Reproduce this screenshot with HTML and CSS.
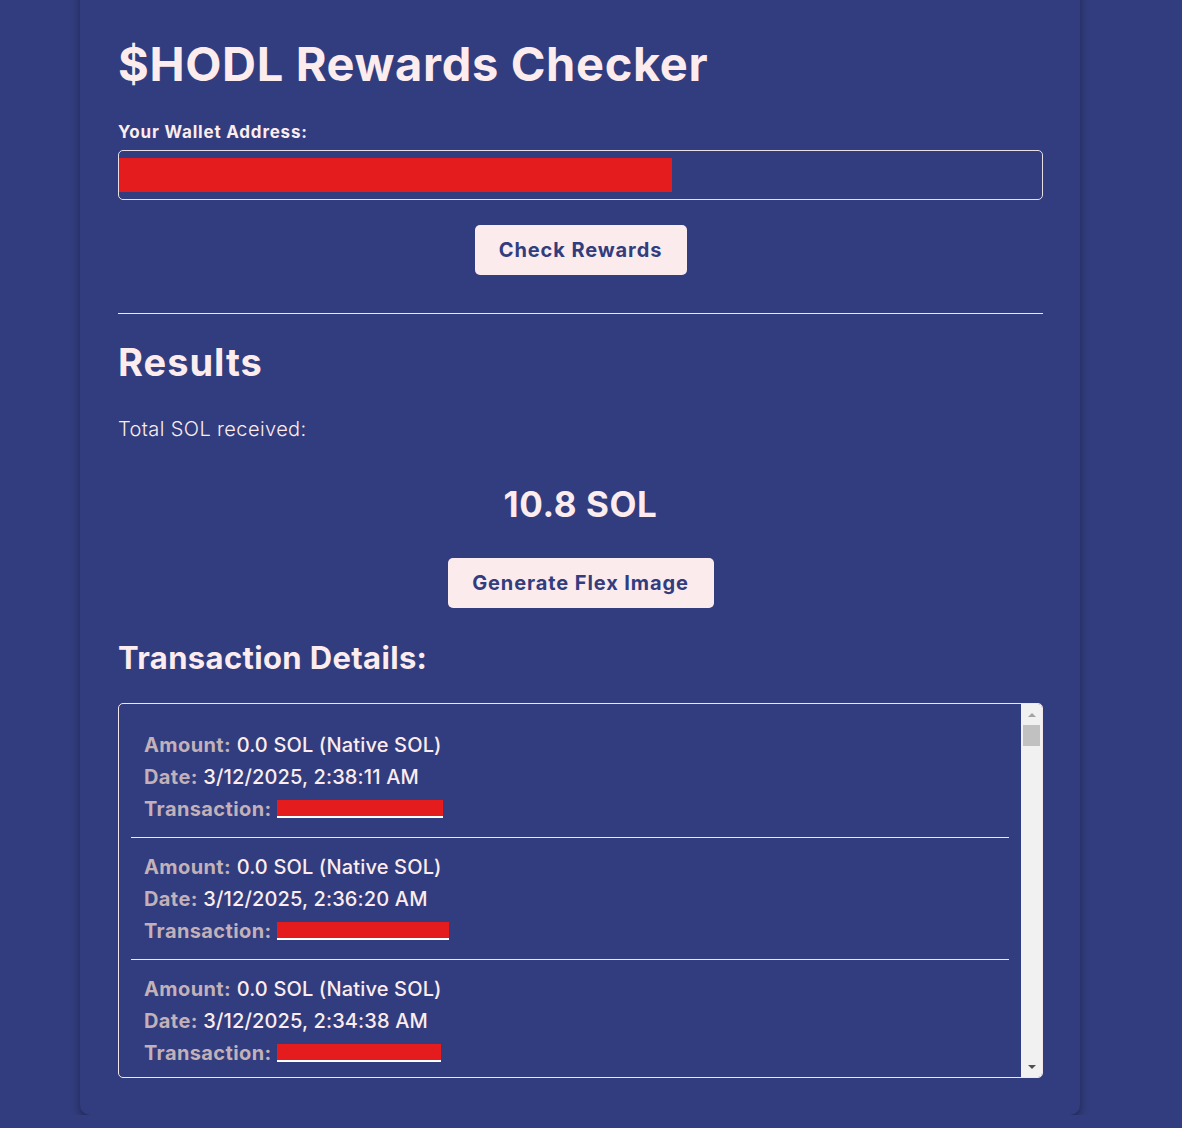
FILE: index.html
```html
<!DOCTYPE html>
<html lang="en">
<head>
<meta charset="utf-8">
<title>$HODL Rewards Checker</title>
<link rel="stylesheet" href="styles.css">
</head>
<body>
<main class="card">
  <h1 class="title">$HODL Rewards Checker</h1>
  <label class="field-label" for="wallet">Your Wallet Address:</label>
  <div class="input-box" id="wallet"><span class="redact redact-input"></span></div>
  <div class="center">
    <button class="btn btn-check">Check Rewards</button>
  </div>
  <hr class="divider">
  <h2 class="results-title">Results</h2>
  <p class="total-label">Total SOL received:</p>
  <p class="total-value">10.8 SOL</p>
  <div class="center">
    <button class="btn btn-flex">Generate Flex Image</button>
  </div>
  <h3 class="details-title">Transaction Details:</h3>
  <div class="tx-box">
    <ul class="tx-list">
      <li class="tx-item">
        <div class="tx-line"><span class="k">Amount:</span> 0.0 SOL (Native SOL)</div>
        <div class="tx-line"><span class="k">Date:</span> 3/12/2025, 2:38:11 AM</div>
        <div class="tx-line"><span class="k">Transaction:</span> <a class="tx-link" href="#"><span class="redact" style="width:166px"></span></a></div>
      </li>
      <li class="tx-item">
        <div class="tx-line"><span class="k">Amount:</span> 0.0 SOL (Native SOL)</div>
        <div class="tx-line"><span class="k">Date:</span> 3/12/2025, 2:36:20 AM</div>
        <div class="tx-line"><span class="k">Transaction:</span> <a class="tx-link" href="#"><span class="redact" style="width:172px"></span></a></div>
      </li>
      <li class="tx-item">
        <div class="tx-line"><span class="k">Amount:</span> 0.0 SOL (Native SOL)</div>
        <div class="tx-line"><span class="k">Date:</span> 3/12/2025, 2:34:38 AM</div>
        <div class="tx-line"><span class="k">Transaction:</span> <a class="tx-link" href="#"><span class="redact" style="width:164px"></span></a></div>
      </li>
    </ul>
    <div class="scrollbar" aria-hidden="true">
      <span class="sb-btn sb-up"></span>
      <span class="sb-thumb"></span>
      <span class="sb-fill"></span>
      <span class="sb-btn sb-down"></span>
    </div>
  </div>
</main>
</body>
</html>
```
FILE: styles.css
```css
* { box-sizing: border-box; }

html, body {
  margin: 0;
  padding: 0;
  background: #313d7e;
}

body {
  font-family: "Inter", "Noto Sans", sans-serif;
  color: #fcecee;
  overflow: hidden;
}

.card {
  width: 1000px;
  margin: -30px 0 0 80px;
  padding: 0 37px 37px 38px;
  background: #313d7e;
  border-radius: 10px;
  box-shadow: 0 4px 10px rgba(0, 0, 0, 0.35);
}

.title {
  margin: 0;
  padding-top: 66px;
  font-size: 47px;
  line-height: 56px;
  font-weight: 700;
  letter-spacing: 0.65px;
}

.field-label {
  display: block;
  margin-top: 30px;
  font-size: 17px;
  line-height: 20px;
  font-weight: 700;
  letter-spacing: 0.8px;
}

.input-box {
  margin-top: 8px;
  height: 50px;
  border: 1px solid #e8dfe6;
  border-radius: 5px;
  padding-top: 7px;
}

.redact {
  display: block;
  background: #e41c1d;
  height: 16px;
}

.redact-input {
  width: 553px;
  height: 34px;
}

.center {
  display: flex;
  justify-content: center;
}

.btn {
  height: 50px;
  border: none;
  border-radius: 5px;
  background: #fcebec;
  color: #313d7e;
  font-family: "Inter", "Noto Sans", sans-serif;
  font-size: 20px;
  font-weight: 700;
  letter-spacing: 0.9px;
  padding: 0;
}

.btn-check { margin-top: 25px; width: 212px; }
.btn-flex { margin-top: 34px; width: 266px; }

.divider {
  margin: 38px 0 0;
  border: none;
  border-top: 1px solid #f2e6ec;
  height: 0;
}

.results-title {
  margin: 26px 0 0;
  font-size: 38px;
  line-height: 44px;
  font-weight: 700;
  letter-spacing: 1px;
}

.total-label {
  margin: 33px 0 0;
  font-size: 20px;
  line-height: 24px;
  font-weight: 300;
  letter-spacing: 0.4px;
}

.total-value {
  margin: 43px 0 0;
  text-align: center;
  font-size: 35px;
  line-height: 40px;
  font-weight: 700;
  letter-spacing: 0.6px;
}

.details-title {
  margin: 31px 0 0;
  font-size: 31px;
  line-height: 38px;
  font-weight: 700;
  letter-spacing: 0.35px;
}

.tx-box {
  margin-top: 26px;
  height: 375px;
  border: 1px solid #f2e6ec;
  border-radius: 5px;
  display: flex;
  overflow: hidden;
}

.tx-list {
  flex: 1;
  list-style: none;
  margin: 0;
  padding: 12px;
  overflow: hidden;
}

.tx-item {
  padding: 13px 13px 12px;
  border-bottom: 1px solid #f2e6ec;
}

.tx-line {
  font-size: 20px;
  line-height: 32px;
  font-weight: 500;
  letter-spacing: 0.15px;
  white-space: nowrap;
}

.k {
  color: #c3b1b9;
  font-weight: 700;
  letter-spacing: 0.4px;
}

.tx-link {
  color: #fff;
  text-decoration: none;
  display: inline-block;
  border-bottom: 2px solid #ffffff;
  vertical-align: -2px;
}

.scrollbar {
  width: 21px;
  flex: none;
  background: #f1f1f1;
  display: flex;
  flex-direction: column;
}

.sb-btn {
  height: 21px;
  flex: none;
  display: flex;
  align-items: center;
  justify-content: center;
}

.sb-btn::before {
  content: "";
  width: 0;
  height: 0;
  border-left: 4px solid transparent;
  border-right: 4px solid transparent;
}

.sb-up::before {
  border-bottom: 4px solid #a3a3a3;
}

.sb-down::before {
  border-top: 4px solid #505050;
}

.sb-thumb {
  height: 21px;
  margin: 0 2px;
  background: #c1c1c1;
  flex: none;
}

.sb-fill {
  flex: 1;
}
```
